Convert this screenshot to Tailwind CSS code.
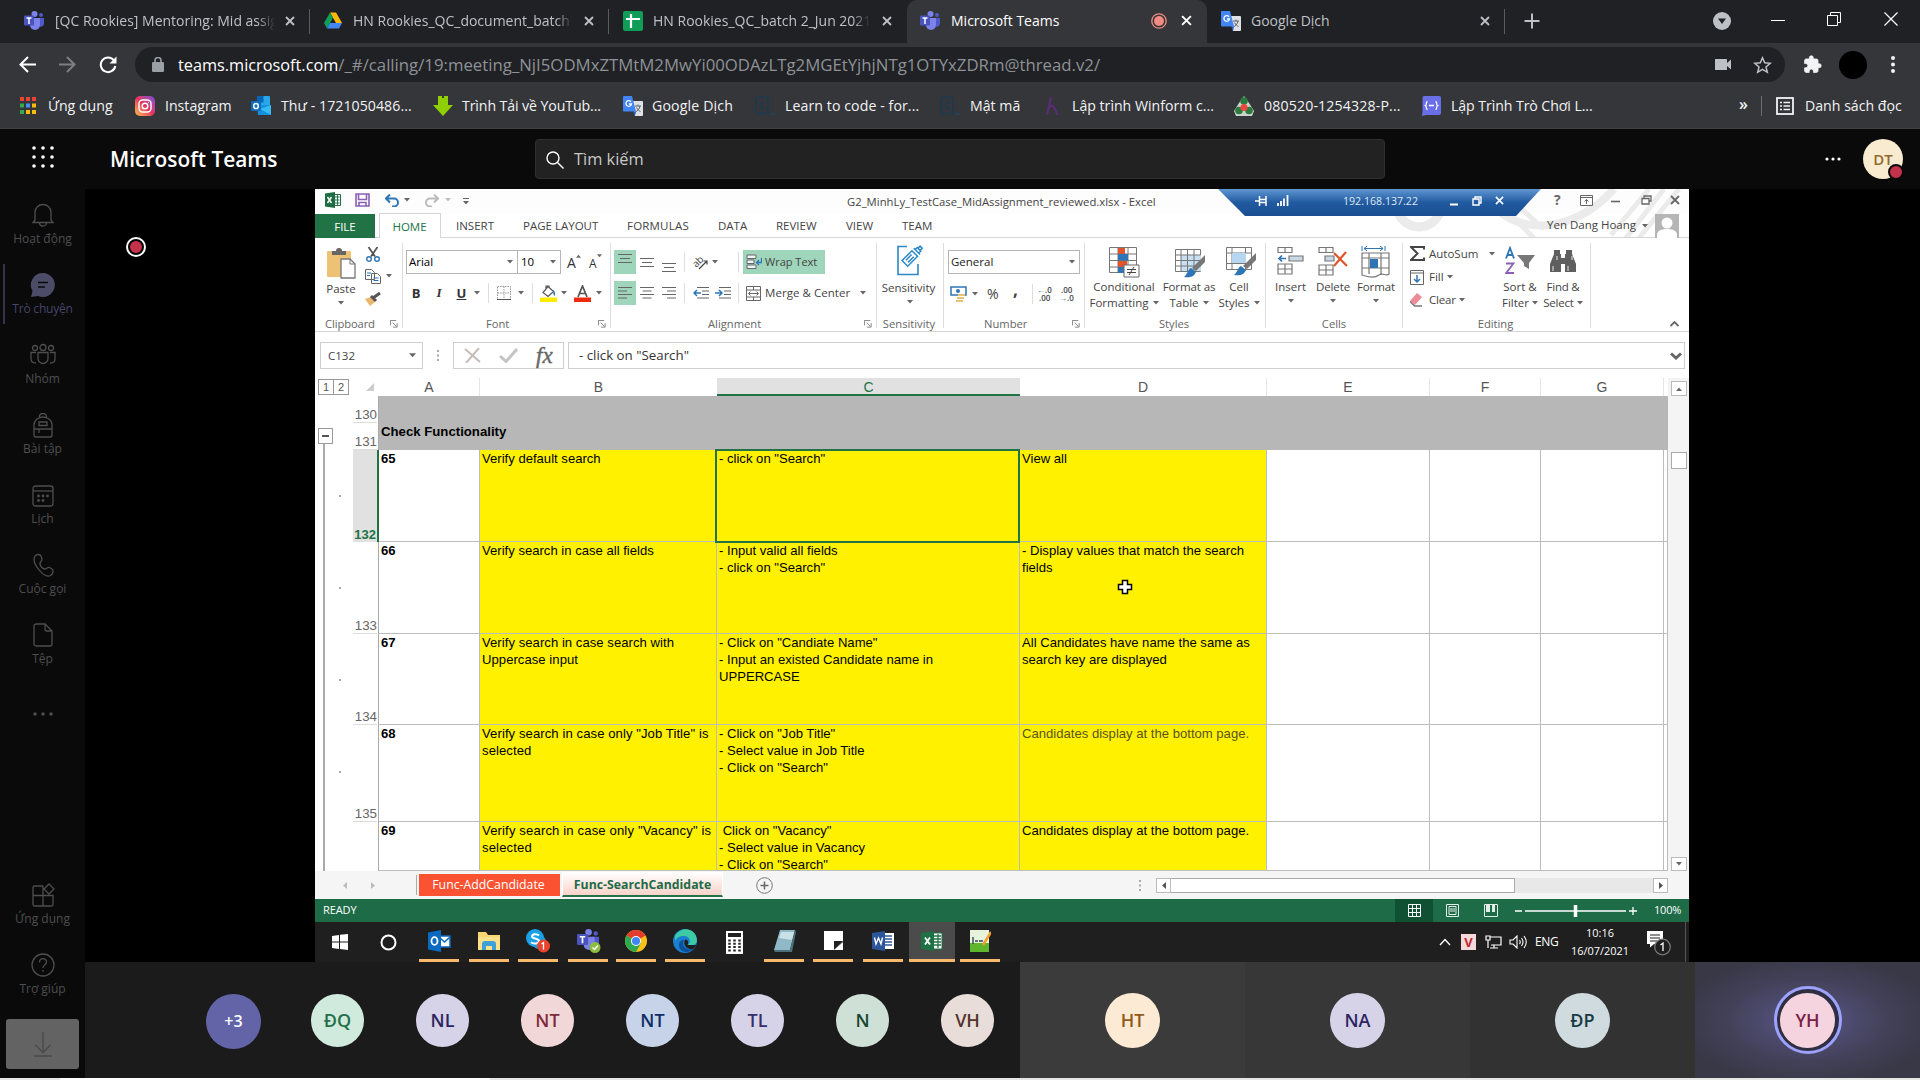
<!DOCTYPE html>
<html lang="vi">
<head>
<meta charset="utf-8">
<title>Microsoft Teams</title>
<script src="https://cdn.jsdelivr.net/npm/@tailwindcss/browser@4"></script>
</head>
<body class="w-[1920px] h-[1080px] overflow-hidden flex flex-col bg-black whitespace-nowrap font-['Open_Sans','Noto_Sans',sans-serif] text-white">

<!-- Shared symbols -->
<svg class="hidden">
  <symbol id="caret" viewBox="0 0 6 4"><path d="M0 0h6L3 3.6z" fill="#666"/></symbol>
  <symbol id="x" viewBox="0 0 10 10"><path d="M1 1l8 8M9 1L1 9" stroke="currentColor" stroke-width="1.8" fill="none"/></symbol>
  <symbol id="launch" viewBox="0 0 9 9"><path d="M.5 6V.5H7M3 3l4 4M8 3.5V8H3.5" stroke="#777" fill="none"/></symbol>
  <symbol id="teams" viewBox="0 0 20 20">
    <circle cx="10.5" cy="3" r="3" fill="#7b83eb"/><circle cx="17" cy="4" r="2" fill="#5059c9"/>
    <path d="M14 7h6v6a3.2 3.2 0 0 1-6 1z" fill="#5059c9"/><path d="M6 7h10v7a5 5 0 0 1-10 0z" fill="#7b83eb"/>
    <rect y="4.500" width="10" height="10" rx="1" fill="#4b53bc"/><path d="M2.500 7h5M5 7v6" stroke="#fff" stroke-width="1.500"/>
  </symbol>
  <symbol id="translate" viewBox="0 0 20 20">
    <path d="M8 5h11a1 1 0 0 1 1 1v13a1 1 0 0 1-1 1h-7z" fill="#dfe1e5"/><path d="M12 10h6M15 8.500V10M17 10c-.5 3-2.500 5-4 5.500M13.500 11.500c1 2 2.500 3.500 4 4" stroke="#5f6368" fill="none"/>
    <path d="M1 0h8l4 15.500H1a1 1 0 0 1-1-1V1a1 1 0 0 1 1-1z" fill="#4285f4"/><path d="M13 15.500L12 20l-2-4.500z" fill="#1a56c4"/>
    <path d="M8 5.800A2.800 2.800 0 1 0 8.500 8H6" stroke="#fff" stroke-width="1.300" fill="none"/>
  </symbol>
  <symbol id="ccode" viewBox="0 0 20 20"><rect x="1" y="1.500" width="12" height="16" rx="1.500" fill="none" stroke="#1d3a4f" stroke-width="1.600"/><path d="M9.500 7a2.500 3 0 1 0 0 5" stroke="#1d3a4f" stroke-width="1.600" fill="none"/><path d="M15 18h5" stroke="#1d4663" stroke-width="1.600"/></symbol>
  <symbol id="outlook" viewBox="0 0 20 20"><rect x="6" width="13" height="13" rx="1" fill="#28a8ea"/><path d="M6 0h6.500v6.500H6z" fill="#0364b8"/><path d="M6 9h14v9a1 1 0 0 1-1 1H7z" fill="#1490df"/><path d="M20 9v10L9 13z" fill="#50d9ff" opacity=".6"/><rect y="5" width="10" height="10" rx="1" fill="#0f6cbd"/><ellipse cx="5" cy="10" rx="2.300" ry="2.600" stroke="#fff" stroke-width="1.500" fill="none"/></symbol>
</svg>

<!-- Browser tab strip -->
<div class="h-[43px] shrink-0 bg-[#202124] flex text-[14px] text-[#bdc1c6] leading-[40px]">
  <div class="w-[309px] pl-6 pr-[14px] flex items-center pb-0.5">
    <svg class="w-5 h-5 shrink-0"><use href="#teams"/></svg>
    <div class="ml-[11px] w-[220px] overflow-hidden mask-r-from-92%">[QC Rookies] Mentoring: Mid assignment</div>
    <svg class="w-[10px] h-[10px] ml-[10px] shrink-0"><use href="#x"/></svg>
  </div>
  <div class="w-px h-[25px] mt-[9px] bg-[#5a5c60]"></div>
  <div class="w-[298px] pl-[14px] flex items-center pb-0.5">
    <svg class="w-[18px] h-[17px] shrink-0" viewBox="0 0 18 16"><path d="M6 0h6l6 10.500h-6z" fill="#ffba00"/><path d="M6 0l3 5.300L3 16 0 10.500z" fill="#0f9d58"/><path d="M6 10.500h12L15 16H3z" fill="#4285f4"/></svg>
    <div class="ml-[11px] w-[220px] overflow-hidden mask-r-from-92%">HN Rookies_QC_document_batch 2</div>
    <svg class="w-[10px] h-[10px] ml-[11px] shrink-0"><use href="#x"/></svg>
  </div>
  <div class="w-px h-[25px] mt-[9px] bg-[#5a5c60]"></div>
  <div class="w-[298px] pl-[14px] flex items-center pb-0.5">
    <svg class="w-5 h-5 shrink-0" viewBox="0 0 20 20"><rect width="20" height="20" rx="2" fill="#0f9d58"/><path d="M8 3v14M3 8h14" stroke="#fff" stroke-width="2.200"/></svg>
    <div class="ml-[10px] w-[217px] overflow-hidden mask-r-from-92%">HN Rookies_QC_batch 2_Jun 2021</div>
    <svg class="w-[10px] h-[10px] ml-[12px] shrink-0"><use href="#x"/></svg>
  </div>
  <div class="w-[300px] bg-[#35363a] rounded-t-[10px] pl-[13px] flex items-center text-white pb-0.5">
    <svg class="w-5 h-5 shrink-0"><use href="#teams"/></svg>
    <div class="ml-[11px] w-[200px]">Microsoft Teams</div>
    <svg class="w-4 h-4 shrink-0" viewBox="0 0 16 16"><circle cx="8" cy="8" r="7.200" fill="none" stroke="#f28b82" stroke-width="1.300"/><circle cx="8" cy="8" r="5" fill="#f28b82"/></svg>
    <svg class="w-[11px] h-[11px] ml-[14px] shrink-0"><use href="#x"/></svg>
  </div>
  <div class="w-[297px] pl-[14px] flex items-center pb-0.5">
    <svg class="w-5 h-5 shrink-0"><use href="#translate"/></svg>
    <div class="ml-[10px] w-[229px]">Google Dịch</div>
    <svg class="w-[10px] h-[10px] shrink-0"><use href="#x"/></svg>
  </div>
  <div class="w-px h-[25px] mt-[9px] bg-[#5a5c60]"></div>
  <div class="w-[415px] pl-[19px] flex items-center pb-0.5">
    <svg class="w-4 h-4" viewBox="0 0 16 16"><path d="M8 .5v15M.5 8h15" stroke="#bdc1c6" stroke-width="2"/></svg>
    <svg class="w-[18px] h-[18px] ml-[173px]" viewBox="0 0 18 18"><circle cx="9" cy="9" r="9" fill="#bdc1c6"/><path d="M5 6.500h8L9 12z" fill="#202124"/></svg>
    <svg class="w-[14px] h-[14px] ml-[40px] mb-1" viewBox="0 0 14 14"><path d="M0 8.500h14" stroke="#fff"/></svg>
    <svg class="w-[14px] h-[14px] ml-[42px] mb-1" viewBox="0 0 14 14"><path d="M.5 3.500h10v10H.5zM3.500 3.500v-3h10v10h-3" fill="none" stroke="#fff"/></svg>
    <svg class="w-[14px] h-[14px] ml-[43px] mb-1" viewBox="0 0 14 14"><path d="M.5.5l13 13M13.500.5l-13 13" stroke="#fff" stroke-width="1.200"/></svg>
  </div>
</div>

<!-- Address bar -->
<div class="h-[43px] shrink-0 bg-[#35363a] flex items-center pl-[19px]">
  <svg class="w-[17px] h-[17px]" viewBox="0 0 17 17"><path d="M17 8.500H2M9 1L1.500 8.500 9 16" fill="none" stroke="#fff" stroke-width="2"/></svg>
  <svg class="w-[17px] h-[17px] ml-[23px]" viewBox="0 0 17 17"><path d="M0 8.500h15M8 1l7.500 7.500L8 16" fill="none" stroke="#7c7e82" stroke-width="2"/></svg>
  <svg class="w-[18px] h-[18px] ml-[23px]" viewBox="0 0 18 18"><path d="M15 4.500A7.300 7.300 0 1 0 16.300 10" fill="none" stroke="#fff" stroke-width="2"/><path d="M17.500 .5v7h-7z" fill="#fff"/></svg>
  <div class="ml-[18px] w-[1650px] h-[35px] rounded-full bg-[#202124] flex items-center pl-[17px]">
    <svg class="w-[12px] h-[15px]" viewBox="0 0 12 15"><rect y="5" width="12" height="10" rx="1.300" fill="#9aa0a6"/><path d="M3 6V3.500a3 3 0 0 1 6 0V6" fill="none" stroke="#9aa0a6" stroke-width="1.600"/></svg>
    <div class="ml-[14px] w-[1528px] text-[#8e9297] text-[16.770px] leading-8 pt-px"><span class="text-white text-[16.300px]">teams.microsoft.com</span>/_#/calling/19:meeting_NjI5ODMxZTMtM2MwYi00ODAzLTg2MGEtYjhjNTg1OTYxZDRm@thread.v2/</div>
    <svg class="w-[16px] h-[11px] ml-[9px]" viewBox="0 0 16 11"><path d="M0 0h12v4l4-3.500v10L12 7v4H0z" fill="#bdc1c6"/></svg>
    <svg class="w-[19px] h-[18px] ml-[22px]" viewBox="0 0 19 18"><path d="M9.500 1.800l2.200 5 5.500.5-4.200 3.600 1.300 5.400-4.800-2.900-4.800 2.900 1.300-5.400-4.200-3.600 5.500-.5z" fill="none" stroke="#bdc1c6" stroke-width="1.500"/></svg>
  </div>
  <svg class="w-[19px] h-[19px] ml-[18px]" viewBox="0 0 24 24"><path d="M20.500 11H19V7c0-1.100-.9-2-2-2h-4V3.500a2.500 2.500 0 0 0-5 0V5H4c-1.100 0-2 .9-2 2v3.800h1.500a2.700 2.700 0 0 1 0 5.400H2V20c0 1.100.9 2 2 2h3.800v-1.500a2.700 2.700 0 0 1 5.400 0V22H17c1.100 0 2-.9 2-2v-4h1.500a2.500 2.500 0 0 0 0-5z" fill="#f1f3f4" stroke="#f1f3f4"/></svg>
  <div class="w-[28px] h-[28px] rounded-full bg-black ml-[17px]"></div>
  <svg class="w-[4px] h-[17px] ml-[24px]" viewBox="0 0 4 17"><circle cx="2" cy="2" r="2" fill="#f1f3f4"/><circle cx="2" cy="8.500" r="2" fill="#f1f3f4"/><circle cx="2" cy="15" r="2" fill="#f1f3f4"/></svg>
</div>

<!-- Bookmarks -->
<div class="h-[43px] shrink-0 bg-[#35363a] border-b border-[#3f4043] flex items-center pl-5 pb-[2px] text-[14.150px] text-[#f1f3f4]">
  <div class="w-[115px] flex items-center gap-3"><svg class="w-4 h-[17px]" viewBox="0 0 16 17"><path d="M0 0h4v4H0zM6 0h4v4H6zM12 0h4v4h-4z" fill="#ea4335"/><path d="M0 6.500h4v4H0zM0 13h4v4H0z" fill="#34a853"/><path d="M6 6.500h4v4H6z" fill="#4a90f0"/><path d="M12 6.500h4v4h-4zM6 13h4v4H6zM12 13h4v4h-4z" fill="#fbbc05"/></svg>Ứng dụng</div>
  <div class="w-[116px] flex items-center gap-[10px]"><div class="w-5 h-5 rounded-[5px] bg-linear-to-tr from-[#fdbb3f] via-[#e4305f] to-[#7a3fd8] grid place-items-center"><svg class="w-[14px] h-[14px]" viewBox="0 0 14 14" fill="none" stroke="#fff" stroke-width="1.400"><rect x="1" y="1" width="12" height="12" rx="3.500"/><circle cx="7" cy="7" r="2.800"/><path d="M10.300 3.500h.6"/></svg></div>Instagram</div>
  <div class="w-[182px] flex items-center gap-[10px]"><svg class="w-5 h-5"><use href="#outlook"/></svg><span class="tracking-[0.050px]">Thư - 1721050486...</span></div>
  <div class="w-[190px] flex items-center gap-[9px]"><svg class="w-5 h-5" viewBox="0 0 20 20"><path d="M5 0h4v2h2V0h4v9h5L10 20 0 9h5z" fill="#8fce00"/></svg><span class="tracking-[-0.100px]">Trình Tải về YouTub...</span></div>
  <div class="w-[132px] flex items-center gap-[9px]"><svg class="w-5 h-5"><use href="#translate"/></svg><span class="tracking-[0.150px]">Google Dịch</span></div>
  <div class="w-[185px] flex items-center gap-[10px]"><svg class="w-5 h-5"><use href="#ccode"/></svg><span class="tracking-[0.080px]">Learn to code - for...</span></div>
  <div class="w-[102px] flex items-center gap-[10px]"><svg class="w-5 h-5"><use href="#ccode"/></svg>Mật mã</div>
  <div class="w-[192px] flex items-center gap-[10px]"><svg class="w-5 h-5" viewBox="0 0 20 20"><path d="M9 1L5 19M6.500 12c3-4 5-2 6 0s2 5 3 7" fill="none" stroke="#5d2a7c" stroke-width="2"/></svg>Lập trình Winform c...</div>
  <div class="w-[187px] flex items-center gap-[10px]"><svg class="w-5 h-5" viewBox="0 0 20 20"><path d="M10 0l5 7 5 8-2 5H2l-2-5 5-8z" fill="#c9d6c9"/><circle cx="10" cy="5" r="3.800" fill="#2d7a3e"/><circle cx="5" cy="14.500" r="3.800" fill="#2d7a3e"/><circle cx="15" cy="14.500" r="3.800" fill="#2d7a3e"/><circle cx="10" cy="11.500" r="3.600" fill="#e8483f"/></svg><span class="tracking-[0.150px]">080520-1254328-P...</span></div>
  <div class="w-[318px] flex items-center gap-[10px]"><svg class="w-5 h-5" viewBox="0 0 20 20"><path d="M3 0h15a2 2 0 0 1 2 2v15a2 2 0 0 1-2 2H5l-4 1 .5-4V2A2 2 0 0 1 3 0z" fill="#6a6fe8"/><path d="M6.500 5.500c-2 0-.5 3.500-2 4 1.500.5 0 4 2 4M14.500 5.500c2 0 .5 3.500 2 4-1.500.5 0 4-2 4M8 9.500h5" fill="none" stroke="#fff" stroke-width="1.300"/></svg><span class="tracking-[-0.080px]">Lập Trình Trò Chơi L...</span></div>
  <div class="w-[22px] font-semibold text-base leading-4 pb-1">»</div>
  <div class="w-px h-5 bg-[#6b6d70]"></div>
  <svg class="w-[18px] h-[18px] ml-[14px]" viewBox="0 0 18 18"><rect x="1" y="1" width="16" height="16" fill="none" stroke="#f1f3f4" stroke-width="1.800"/><path d="M4 5.500h2M4 9h2M4 12.500h2M7.500 5.500H14M7.500 9H14M7.500 12.500H14" stroke="#f1f3f4" stroke-width="1.700"/></svg>
  <div class="ml-[11px]">Danh sách đọc</div>
</div>

<!-- Teams header -->
<header class="h-[60px] shrink-0 bg-[#0a0a0a] flex items-center">
  <svg class="w-[22px] h-[22px] ml-8 mb-1" viewBox="0 0 22 22" fill="#fff"><circle cx="2" cy="2" r="1.800"/><circle cx="11" cy="2" r="1.800"/><circle cx="20" cy="2" r="1.800"/><circle cx="2" cy="11" r="1.800"/><circle cx="11" cy="11" r="1.800"/><circle cx="20" cy="11" r="1.800"/><circle cx="2" cy="20" r="1.800"/><circle cx="11" cy="20" r="1.800"/><circle cx="20" cy="20" r="1.800"/></svg>
  <h1 class="ml-[56px] w-[425px] text-[20.900px] font-semibold pt-[2px]">Microsoft Teams</h1>
  <div class="w-[850px] h-10 rounded bg-[#222] border border-[#2f2f2f] flex items-center pl-[10px] text-[16.400px] text-[#c8c8c8] pt-px">
    <svg class="w-[18px] h-[18px] mr-[10px]" viewBox="0 0 18 18" fill="none" stroke="#fff" stroke-width="1.400"><circle cx="7" cy="7" r="6"/><path d="M11.500 11.500l6 6"/></svg>Tìm kiếm
  </div>
  <svg class="w-[16px] h-[4px] ml-[440px]" viewBox="0 0 16 4" fill="#fff"><circle cx="2" cy="2" r="1.600"/><circle cx="8" cy="2" r="1.600"/><circle cx="14" cy="2" r="1.600"/></svg>
  <div class="relative ml-[22px] size-10 rounded-full bg-[#f8ebcf] grid place-items-center text-[15px] font-semibold text-[#8f6a2e]">DT
    <div class="absolute left-[25px] top-[25px] size-4 rounded-full bg-[#c4314b] border-2 border-[#0a0a0a]"></div>
  </div>
</header>

<div class="h-[889px] shrink-0 flex">
  <!-- App rail -->
  <nav class="w-[85px] bg-[#0a0a0a] flex flex-col text-[12px] leading-4 text-[#4e4e4e] text-center">
    <div class="h-[70px] flex flex-col items-center pt-[14px] gap-1"><svg class="w-6 h-6" viewBox="0 0 24 24" fill="none" stroke="currentColor" stroke-width="1.300"><path d="M4 17V9a8 7.500 0 0 1 16 0v8l2 2.500H2zM8.500 20a3.500 3 0 0 0 7 0"/></svg><div>Hoạt động</div></div>
    <div class="h-[70px] flex flex-col items-center pt-[13px] gap-[3px] relative text-[#45456a]"><div class="absolute left-[3px] top-[5px] w-[2px] h-[60px] bg-[#33344a]"></div><svg class="w-[26px] h-[26px]" viewBox="0 0 26 26"><path d="M13 1a12 12 0 1 1-5 23l-7 1 1.500-6A12 12 0 0 1 13 1z" fill="#4c4c69"/><path d="M8 10.500h10M8 15h7" stroke="#0a0a0a" stroke-width="1.600"/></svg><div class="tracking-[-0.200px]">Trò chuyện</div></div>
    <div class="h-[70px] flex flex-col items-center pt-[14px] gap-1"><svg class="w-[26px] h-[24px]" viewBox="0 0 26 24" fill="none" stroke="currentColor" stroke-width="1.300"><circle cx="5" cy="5" r="2.500"/><circle cx="13" cy="4.500" r="3"/><circle cx="21" cy="5" r="2.500"/><path d="M8 9.500h10v6a5 5 0 0 1-10 0zM6 9.500H1V16c0 3 2 4 5 4M20 9.500h5V16c0 3-2 4-5 4"/></svg><div>Nhóm</div></div>
    <div class="h-[70px] flex flex-col items-center pt-[14px] gap-[3px]"><svg class="w-6 h-[25px]" viewBox="0 0 24 25" fill="none" stroke="currentColor" stroke-width="1.300"><path d="M3 22V12a9 8 0 0 1 18 0v10c0 1-1 2-2 2H5c-1 0-2-1-2-2zM8.500 5V3.500a3.500 3 0 0 1 7 0V5M3 16h18M8 16v4M8 9h8v3.500H8z"/></svg><div>Bài tập</div></div>
    <div class="h-[70px] flex flex-col items-center pt-[16px] gap-1"><svg class="w-[22px] h-[22px]" viewBox="0 0 22 22" fill="none" stroke="currentColor" stroke-width="1.300"><rect x="1" y="1" width="20" height="20" rx="2.500"/><path d="M1 6h20"/><g fill="currentColor" stroke="none"><circle cx="6.500" cy="11" r="1.400"/><circle cx="11" cy="11" r="1.400"/><circle cx="15.500" cy="11" r="1.400"/><circle cx="6.500" cy="15.500" r="1.400"/><circle cx="11" cy="15.500" r="1.400"/></g></svg><div>Lịch</div></div>
    <div class="h-[70px] flex flex-col items-center pt-[14px] gap-1"><svg class="w-6 h-6" viewBox="0 0 24 24" fill="none" stroke="currentColor" stroke-width="1.300"><path d="M4 3c2-2 5-2 6 0l1 3c.5 2-2.500 3-2 5s2.500 4.500 4.500 5 3-2.500 5-1.500l2.500 1.500c2 1.500 1 5-1.500 6.500C13 26 0 10 4 3z"/></svg><div>Cuộc gọi</div></div>
    <div class="h-[70px] flex flex-col items-center pt-[14px] gap-1"><svg class="w-5 h-6" viewBox="0 0 20 24" fill="none" stroke="currentColor" stroke-width="1.300"><path d="M3 1h9l7 7v13c0 1-1 2-2 2H3c-1 0-2-1-2-2V3c0-1 1-2 2-2zM12 1v5c0 1 1 2 2 2h5"/></svg><div>Tệp</div></div>
    <div class="h-[186px] flex flex-col items-center pt-[33px]"><svg class="w-5 h-[4px]" viewBox="0 0 20 4" fill="currentColor"><circle cx="2" cy="2" r="1.800"/><circle cx="10" cy="2" r="1.800"/><circle cx="18" cy="2" r="1.800"/></svg></div>
    <div class="h-[70px] flex flex-col items-center pt-[18px] gap-1"><svg class="w-6 h-6" viewBox="0 0 24 24" fill="none" stroke="currentColor" stroke-width="1.300"><path d="M12 3H3.500C2.500 3 2 3.500 2 4.500v17c0 1 .5 1.500 1.500 1.500h17c1 0 1.500-.5 1.500-1.500V12.500H2M12 3v20M18 1l5 5-5 5-5-5z"/></svg><div>Ứng dụng</div></div>
    <div class="h-[73px] flex flex-col items-center pt-[18px] gap-1"><svg class="w-6 h-6" viewBox="0 0 24 24" fill="none" stroke="currentColor" stroke-width="1.300"><circle cx="12" cy="12" r="11"/><path d="M8.500 9.500c0-5 7-5 7-.5 0 3-3.500 2.500-3.500 6M12 17v1.800"/></svg><div>Trợ giúp</div></div>
    <div class="mx-auto w-[73px] h-[50px] mt-[11px] bg-[#636363] rounded-[3px] grid place-items-center"><svg class="w-[18px] h-[25px]" viewBox="0 0 18 25" fill="none" stroke="#4a4a4a" stroke-width="1.400"><path d="M9 0v20M1.500 13L9 20.500 16.500 13M0 24h18"/></svg></div>
  </nav>

  <main class="flex-1 flex flex-col">
    <div class="h-[773px] flex">
      <div class="w-[230px] pt-[48px] pl-[41px]"><div class="size-[20px] rounded-full border-2 border-white grid place-items-center"><div class="size-3 rounded-full bg-[#c4314b]"></div></div></div>

      <!-- Shared desktop: spreadsheet window -->
      <div class="w-[1374px] flex flex-col bg-white text-[#444] text-[11.500px]">
        <!-- Title row -->
        <div class="h-[25px] relative bg-[#fdfdfd] flex items-center text-[11.300px]">
          <svg class="absolute right-0 top-0 w-[360px] h-[49px]" viewBox="0 0 360 49" fill="none" stroke="#ebebeb"><circle cx="90" cy="16" r="22" stroke-width="9"/><path d="M155 0l50 49M170 0l45 40M350 0l-40 49M335 0l-38 49M320 0l-38 46" stroke-width="5"/><path d="M160 10c20 34 80 40 125-10" stroke-width="8"/></svg>
          <svg class="w-4 h-4 ml-[10px] mb-[3px]" viewBox="0 0 16 16"><path d="M9 2.500h6.500v11H9z" fill="#fff" stroke="#217346"/><path d="M9.500 5h5M9.500 8h5M9.500 11h5M12.500 3v10" stroke="#217346"/><path d="M0 1.500L10 0v16L0 14.500z" fill="#1e6b43"/><path d="M2.500 5l4 6M6.500 5l-4 6" stroke="#fff" stroke-width="1.400"/></svg>
          <svg class="w-[15px] h-[14px] ml-[14px] mb-[3px]" viewBox="0 0 15 14"><path d="M1 1h13v12H1zM3.500 1v5.500h8V1M4 13V9.500h7V13" fill="none" stroke="#8a5fb5" stroke-width="1.600"/></svg>
          <svg class="w-[15px] h-[13px] ml-[15px] mb-[3px]" viewBox="0 0 15 13"><path d="M1 4.500h8a4 4 0 0 1 0 8H7M5 .5l-4 4 4 4" fill="none" stroke="#2e75b6" stroke-width="2"/></svg>
          <svg class="w-[6px] h-1 ml-[4px] mb-[3px]"><use href="#caret"/></svg>
          <svg class="w-[15px] h-[13px] ml-[14px] mb-[3px]" viewBox="0 0 15 13"><path d="M14 4.500H6a4 4 0 0 0 0 8h2M10 .5l4 4-4 4" fill="none" stroke="#bbb" stroke-width="2"/></svg>
          <svg class="w-[6px] h-1 ml-[6px] mb-[3px] opacity-40"><use href="#caret"/></svg>
          <svg class="w-[6px] h-[7px] ml-3 mb-[1px]" viewBox="0 0 6 7"><path d="M0 .5h6" stroke="#666"/><path d="M0 3h6L3 6.500z" fill="#666"/></svg>
          <div class="ml-[378px] w-[371px] pt-[1px]">G2_MinhLy_TestCase_MidAssignment_reviewed.xlsx - Excel</div>
          <div class="relative self-start w-[323px] h-[27px] bg-linear-to-b from-[#5e97d3] via-[#215a9f] to-[#1b4e93] [clip-path:polygon(0_0,100%_0,298px_100%,27px_100%)] flex items-center text-[#dfe9f5] text-[10.600px] pb-0.5">
            <svg class="w-3 h-[10px] ml-[37px] mb-0.5" viewBox="0 0 12 10"><path d="M0 5h4M4.500 0v10M5 3.500h6v3H5M11 0v10" stroke="#fff" stroke-width="1.500" fill="none"/></svg>
            <svg class="w-3 h-[11px] ml-[10px] mb-0.5" viewBox="0 0 12 11"><path d="M1 11V8M4 11V6M7 11V3.500M10.500 11V0" stroke="#fff" stroke-width="1.800"/></svg>
            <div class="ml-[54px] w-[75px]">192.168.137.22</div>
            <svg class="w-2 h-[10px] ml-[32px] mb-0.5" viewBox="0 0 8 10"><path d="M0 8.500h8" stroke="#fff" stroke-width="2"/></svg>
            <svg class="w-[10px] h-[10px] ml-[14px] mb-0.5" viewBox="0 0 10 10"><path d="M3 3V1h6v6H7M1 3h6v6H1z" fill="none" stroke="#fff" stroke-width="1.400"/></svg>
            <svg class="w-[9px] h-[9px] ml-[13px] text-white mb-0.5"><use href="#x"/></svg>
          </div>
          <div class="relative flex items-center pb-[3px]">
            <div class="ml-[13px] w-2 font-bold text-[14px] leading-4 text-[#666]">?</div>
            <svg class="w-[13px] h-[11px] ml-[18px]" viewBox="0 0 13 11"><path d="M.5.5h12v10H.5zM.5 2.500h12M6.500 9V4.500M4.500 6.500l2-2 2 2" fill="none" stroke="#666"/></svg>
            <svg class="w-[9px] h-[10px] ml-[18px]" viewBox="0 0 9 10"><path d="M0 6.500h9" stroke="#666" stroke-width="1.600"/></svg>
            <svg class="w-[11px] h-[10px] ml-[21px]" viewBox="0 0 11 10"><path d="M3 3V1h7v5H8M1 3.500h7v5.500H1z" fill="none" stroke="#666" stroke-width="1.300"/></svg>
            <svg class="w-[10px] h-[10px] ml-[18px] text-[#666]"><use href="#x"/></svg>
          </div>
        </div>
        <!-- Ribbon tabs -->
        <div class="h-[24px] relative border-b border-[#d5d5d5] flex items-center leading-[25px]">
          <div class="w-[60px] h-[24px] bg-[#217346] text-white text-center">FILE</div>
          <div class="ml-1 w-[62px] h-[25px] bg-white border border-b-0 border-[#d5d5d5] text-[#217346] text-center pr-px">HOME</div>
          <div class="ml-[15px] w-[67px]">INSERT</div><div class="w-[104px]">PAGE LAYOUT</div><div class="w-[91px] tracking-[0.200px]">FORMULAS</div><div class="w-[58px]">DATA</div><div class="w-[70px]">REVIEW</div><div class="w-[56px]">VIEW</div><div class="w-[645px]">TEAM</div>
          <div class="w-[95px] leading-[22px] pb-0.5">Yen Dang Hoang</div>
          <svg class="w-[6px] h-1"><use href="#caret"/></svg>
          <svg class="w-6 h-6 ml-[7px]" viewBox="0 0 24 24"><path d="M0 0h24v24H0z" fill="#b5b5b5"/><circle cx="12" cy="9" r="5.500" fill="#fff"/><path d="M2 24v-3c0-4 4-6 10-6s10 2 10 6v3z" fill="#fff"/></svg>
        </div>
        <!-- Ribbon -->
        <div class="h-[94px] border-b border-[#d5d5d5] flex pt-[5px]">
          <!-- Clipboard -->
          <div class="w-[88px] h-[85px] border-r border-[#dcdcdc] flex flex-col">
            <div class="flex h-[70px] shrink-0">
              <div class="w-[52px] flex flex-col items-center pt-1"><svg class="w-[29px] h-[32px]" viewBox="0 0 29 32"><rect y="4" width="24" height="26" rx="1" fill="#eec274"/><path d="M5 8V4h4a3 3 0 0 1 6 0h4v4z" fill="#666"/><path d="M14 12h9l5 5v14H14z" fill="#fff" stroke="#777" stroke-width="1.300"/><path d="M23 12v5h5" fill="none" stroke="#777"/></svg><div class="leading-[17px] mt-px">Paste</div><svg class="w-[6px] h-1 mt-[4px]"><use href="#caret"/></svg></div>
              <div class="w-3 h-[67px] flex flex-col items-center justify-around">
                <svg class="w-[14px] h-[15px]" viewBox="0 0 14 15"><path d="M2.500 0L9 9.500M11.500 0L5 9.500" stroke="#555" stroke-width="1.800"/><circle cx="3" cy="12" r="2.300" fill="none" stroke="#2e75b6" stroke-width="1.400"/><circle cx="11" cy="12" r="2.300" fill="none" stroke="#2e75b6" stroke-width="1.400"/></svg>
                <svg class="w-[16px] h-[15px]" viewBox="0 0 16 15"><path d="M.5.5h6l3 3v7h-9zM6.500 4.500h6l3 3v7h-9z" fill="#fff" stroke="#666"/><path d="M8.500 9h5M8.500 11.500h5M2 4h4M2 6.500h3" stroke="#2e75b6"/></svg>
                <svg class="w-[16px] h-[14px]" viewBox="0 0 16 14"><path d="M0 7l6-2 4 5-5 4z" fill="#e8b96a"/><path d="M6 4l5 5M8 6l7-5" stroke="#555" stroke-width="3"/></svg>
              </div>
              <div class="pt-[31px] pl-[7px] leading-none"><svg class="w-[6px] h-1"><use href="#caret"/></svg></div>
            </div>
            <div class="flex items-center h-[22px] pl-[10px] text-[11.200px] text-[#666] shrink-0"><div class="w-[65px] tracking-[-0.100px]">Clipboard</div><svg class="w-2 h-2"><use href="#launch"/></svg></div>
          </div>
          <!-- Font -->
          <div class="w-[208px] h-[85px] border-r border-[#dcdcdc] flex flex-col text-[#333]">
            <div class="flex h-[38px] pt-[7px] pl-[3px] shrink-0">
              <div class="w-[112px] h-[24px] border border-[#b5b5b5] flex items-center pl-[2px] text-black"><div class="w-[98px]">Arial</div><svg class="w-[6px] h-1"><use href="#caret"/></svg></div>
              <div class="w-[43px] h-[24px] border border-l-0 border-[#b5b5b5] flex items-center pl-[3px] text-black text-[11.500px]"><div class="w-[29px]">10</div><svg class="w-[6px] h-1"><use href="#caret"/></svg></div>
              <div class="w-[23px] pl-[6px] text-[14px] leading-[26px] flex">A<svg class="w-[5px] h-[4px] mt-[4px] rotate-180"><use href="#caret"/></svg></div>
              <div class="w-[20px] pl-[5px] text-[12px] leading-[28px] flex">A<svg class="w-[5px] h-[4px] mt-[4px]"><use href="#caret"/></svg></div>
            </div>
            <div class="flex items-center h-[24px] text-[13px] leading-5 shrink-0">
              <div class="w-[26px] text-center font-bold">B</div><div class="w-[20px] text-center font-['Liberation_Serif',serif] italic font-bold">I</div><div class="w-[25px] text-center font-bold underline">U</div>
              <svg class="w-[6px] h-1"><use href="#caret"/></svg><div class="w-px h-5 bg-[#ddd] ml-[8px]"></div>
              <svg class="w-[14px] h-[14px] ml-[8px]" viewBox="0 0 14 14"><path d="M.5.5h13v13H.5zM7 .5v13M.5 7h13" fill="none" stroke="#999" stroke-dasharray="1.500 1"/><path d="M0 13.500h14" stroke="#555"/></svg>
              <svg class="w-[6px] h-1 ml-[7px]"><use href="#caret"/></svg><div class="w-px h-5 bg-[#ddd] ml-[8px]"></div>
              <svg class="w-[17px] h-[17px] ml-[7px]" viewBox="0 0 17 17"><path d="M8 1.500l5.500 5L8 11.500 3 7.500zM6 4V1h3v2" fill="#fff" stroke="#555" stroke-width="1.200"/><path d="M13 5c3 2 2 6 1.500 6S13 8 13 5z" fill="#2e75b6"/><path d="M0 12.500h17V17H0z" fill="#ffeb00"/></svg>
              <svg class="w-[6px] h-1 ml-[4px]"><use href="#caret"/></svg>
              <svg class="w-[17px] h-[17px] ml-[7px]" viewBox="0 0 17 17"><path d="M4 12L8.500 1 13 12M5.500 8.500h6" fill="none" stroke="#555" stroke-width="1.700"/><path d="M0 12.500h17V17H0z" fill="#ee2a10"/></svg>
              <svg class="w-[6px] h-1 ml-[5px]"><use href="#caret"/></svg>
            </div>
            <div class="flex items-center h-[22px] mt-[8px] pl-[83px] text-[11.200px] text-[#666] shrink-0"><div class="w-[112px]">Font</div><svg class="w-2 h-2"><use href="#launch"/></svg></div>
          </div>
          <!-- Alignment -->
          <div class="w-[266px] h-[85px] border-r border-[#dcdcdc] flex flex-col">
            <div class="flex h-[31px] pt-[7px] pl-[3px] items-center shrink-0">
              <div class="w-[22px] h-[24px] bg-[#9fd5bb] grid justify-center pt-1"><svg class="w-[14px] h-[9px]" viewBox="0 0 14 9"><path d="M0 .5h14M2 4.500h10M0 8.500h14" stroke="#666"/></svg></div>
              <svg class="w-[14px] h-[9px] ml-1" viewBox="0 0 14 9"><path d="M0 .5h14M2 4.500h10M0 8.500h14" stroke="#666"/></svg>
              <svg class="w-[14px] h-[9px] ml-2 mt-[10px]" viewBox="0 0 14 9"><path d="M0 .5h14M2 4.500h10M0 8.500h14" stroke="#666"/></svg>
              <div class="w-px h-5 bg-[#ddd] ml-[8px]"></div>
              <svg class="w-4 h-4 ml-[8px]" viewBox="0 0 16 16"><g transform="rotate(-45 6 7)"><text x="-1" y="10" font-size="10" fill="#444">ab</text></g><path d="M6 15l8-8M10.500 7H14v3.500" fill="none" stroke="#444" stroke-width="1.200"/></svg>
              <svg class="w-[6px] h-1 ml-[3px]"><use href="#caret"/></svg>
              <div class="w-px h-5 bg-[#ddd] ml-[20px]"></div>
              <div class="ml-1 w-[82px] h-[24px] bg-[#9fd5bb] flex items-center pl-[3px] text-[11px]"><svg class="w-4 h-4 mr-[3px]" viewBox="0 0 16 16"><path d="M1 1h9v3.500H1zM1 6h7v3.500H1zM1 11h9v3.500H1z" fill="#eef6fb" stroke="#666"/><path d="M15.500 4v4.500H11M13 6l-2.500 2.500L13 11" fill="none" stroke="#2e75b6" stroke-width="1.300"/></svg>Wrap Text</div>
            </div>
            <div class="flex h-[24px] mt-[7px] pl-[3px] items-center shrink-0">
              <div class="w-[22px] h-[24px] bg-[#9fd5bb] grid place-items-center"><svg class="w-[14px] h-[12px]" viewBox="0 0 14 12"><path d="M0 .5h14M0 4h9M0 7.500h14M0 11h9" stroke="#666"/></svg></div>
              <svg class="w-[14px] h-[12px] ml-1" viewBox="0 0 14 12"><path d="M0 .5h14M2.500 4h9M0 7.500h14M2.500 11h9" stroke="#666"/></svg>
              <svg class="w-[14px] h-[12px] ml-2" viewBox="0 0 14 12"><path d="M0 .5h14M5 4h9M0 7.500h14M5 11h9" stroke="#666"/></svg>
              <div class="w-px h-5 bg-[#ddd] ml-[8px]"></div>
              <svg class="w-4 h-3 ml-[8px]" viewBox="0 0 16 12"><path d="M4 .5h12M9 4h7M9 7.500h7M4 11h12" stroke="#666"/><path d="M8 6H1.500M4 3L1 6l3 3" fill="none" stroke="#2e75b6" stroke-width="1.500"/></svg>
              <svg class="w-4 h-3 ml-[6px]" viewBox="0 0 16 12"><path d="M4 .5h12M9 4h7M9 7.500h7M4 11h12" stroke="#666"/><path d="M0 6h6.500M4 3l3 3-3 3" fill="none" stroke="#2e75b6" stroke-width="1.500"/></svg>
              <div class="w-px h-5 bg-[#ddd] ml-[7px]"></div>
              <svg class="w-[15px] h-[15px] ml-[7px] mr-1" viewBox="0 0 15 15"><path d="M.5.5h14v14H.5zM.5 4h14M.5 11h14M7.500.5V4M7.500 11v3.500" fill="none" stroke="#666"/><path d="M2.500 7.500h10M4.500 5.500l-2 2 2 2M10.500 5.500l2 2-2 2" fill="none" stroke="#666"/></svg>
              <div class="w-[95px] tracking-[0.050px]">Merge &amp; Center</div><svg class="w-[6px] h-1"><use href="#caret"/></svg>
            </div>
            <div class="flex items-center h-[22px] mt-[8px] pl-[97px] text-[11.200px] text-[#666] shrink-0"><div class="w-[156px]">Alignment</div><svg class="w-2 h-2"><use href="#launch"/></svg></div>
          </div>
          <!-- Sensitivity -->
          <div class="w-[67px] h-[85px] border-r border-[#dcdcdc] flex flex-col items-center pt-px [&>*]:shrink-0">
            <svg class="w-[30px] h-[32px]" viewBox="0 0 30 32"><path d="M12 2.500H3v28h20V20" fill="none" stroke="#2b88c9" stroke-width="1.600"/><g transform="rotate(45 18 12)" fill="#fff" stroke="#2b88c9" stroke-width="1.500"><rect x="13.500" y="9" width="8" height="14"/><path d="M16 12v8M19 12v8M13 6h9M15 6V3h5v3M16 0h3v3h-3z"/></g></svg>
            <div class="leading-[17px] mt-[3px] -ml-[3px]">Sensitivity</div><svg class="w-[6px] h-1 mt-1"><use href="#caret"/></svg>
            <div class="mt-[12px] leading-[16px] text-[11.200px] text-[#666] -ml-[2px]">Sensitivity</div>
          </div>
          <!-- Number -->
          <div class="w-[141px] h-[85px] border-r border-[#dcdcdc] flex flex-col">
            <div class="h-[39px] pt-[7px] pl-1 shrink-0"><div class="w-[132px] h-[24px] border border-[#b5b5b5] flex items-center pl-[2px] text-[#222]"><div class="w-[118px]">General</div><svg class="w-[6px] h-1"><use href="#caret"/></svg></div></div>
            <div class="flex h-[24px] items-center pl-[6px] shrink-0">
              <svg class="w-[17px] h-[16px]" viewBox="0 0 17 16"><path d="M1 1h15v8H1z" fill="#fff" stroke="#2e75b6" stroke-width="1.500"/><circle cx="8" cy="5" r="2" fill="#2e75b6"/><path d="M8 8h7v2H8zM7 11h7v2H7zM6 14h7v2H6z" fill="#eec274"/></svg>
              <svg class="w-[6px] h-1 ml-[5px]"><use href="#caret"/></svg>
              <div class="ml-[9px] w-[26px] text-[14px] leading-6">%</div><div class="w-[19px] text-[17px] font-bold leading-4 pb-2">,</div><div class="w-px h-5 bg-[#ddd]"></div>
              <div class="ml-[4px] w-[22px] text-[8px] leading-[8px] font-semibold"><span class="text-[#2e75b6]">←</span>.0<br>&nbsp;.00</div>
              <div class="w-[20px] text-[8px] leading-[8px] font-semibold">&nbsp;.00<br><span class="text-[#2e75b6]">→</span>.0</div>
            </div>
            <div class="flex items-center h-[22px] mt-[7px] pl-[40px] text-[11.200px] text-[#666] shrink-0"><div class="w-[88px]">Number</div><svg class="w-2 h-2"><use href="#launch"/></svg></div>
          </div>
          <!-- Styles -->
          <div class="w-[181px] h-[85px] border-r border-[#dcdcdc] flex flex-col">
            <div class="flex h-[71px] leading-4 text-center pt-[3px] shrink-0">
              <div class="w-[78px] flex flex-col items-center"><svg class="w-[31px] h-[32px]" viewBox="0 0 31 32"><path d="M.5 1.500h27v25H.5zM9 1.500v25M19 1.500v25M.5 8h27M.5 14.500h27M.5 21h27" fill="#fff" stroke="#777"/><path d="M9 2h7v6H9zM9 15h9v6H9z" fill="#e0562c"/><path d="M9 8h10v6.500H9zM9 21h6v6H9z" fill="#2e75b6"/><path d="M15 19h15v12H15z" fill="#fff" stroke="#666"/><path d="M18 23.500h9M18 26.500h9M25 21l-5 8" stroke="#444" fill="none"/></svg><div class="mt-px">Conditional</div><div class="flex items-center gap-1">Formatting<svg class="w-[6px] h-1"><use href="#caret"/></svg></div></div>
              <div class="w-[52px] flex flex-col items-center"><svg class="w-[31px] h-[32px] ml-0.5" viewBox="0 0 31 32"><path d="M.5 3.500h25v22H.5z" fill="#fff" stroke="#777"/><path d="M6 9h20v16H6z" fill="#c7dff2"/><path d="M6 3.500v22M12.500 3.500v22M19 3.500v22M.5 9h25M.5 14.500h25M.5 20h25" stroke="#777"/><path d="M30 9v7l-9 9-4-3z" fill="#777"/><path d="M16 22l5 4c-2 5-7 6-12 5 3-2 4-8 7-9z" fill="#2e75b6"/></svg><div class="mt-px tracking-[-0.100px]">Format as</div><div class="flex items-center gap-1">Table<svg class="w-[6px] h-1"><use href="#caret"/></svg></div></div>
              <div class="w-[48px] flex flex-col items-center"><svg class="w-[31px] h-[32px] ml-1" viewBox="0 0 31 32"><path d="M.5 1.500h25v22H.5zM6 1.500v22M19.500 1.500v22M.5 7h25M.5 17.500h25" fill="#fff" stroke="#777"/><path d="M6 7h14v10H6z" fill="#b7d6ef"/><path d="M30 7v7l-9 9-4-3z" fill="#777"/><path d="M15 20l5 4c-2 5-7 6-12 5 3-2 4-8 7-9z" fill="#2e75b6"/></svg><div class="mt-px">Cell</div><div class="flex items-center gap-1">Styles<svg class="w-[6px] h-1"><use href="#caret"/></svg></div></div>
            </div>
            <div class="text-center leading-[20px] text-[11.200px] text-[#666] pr-0.5">Styles</div>
          </div>
          <!-- Cells -->
          <div class="w-[137px] h-[85px] border-r border-[#dcdcdc] flex flex-col">
            <div class="flex h-[71px] leading-4 pt-[3px] shrink-0">
              <div class="w-[49px] flex flex-col items-center"><svg class="w-[27px] h-[32px]" viewBox="0 0 27 32" fill="#fff" stroke="#777" stroke-width="1.200"><path d="M1 1.500h14v5H1zM8 1.500v5M1 18h14v10H1zM8 18v10M1 23h14"/><path d="M12 10h14v5H12z" fill="#c9d8e6"/><path d="M9 12.500H2M5 9.500l-3 3 3 3" stroke="#2e75b6" stroke-width="1.700" fill="none"/></svg><div class="mt-px">Insert</div><svg class="w-[6px] h-1 mt-[4px]"><use href="#caret"/></svg></div>
              <div class="w-[36px] flex flex-col items-center"><svg class="w-[30px] h-[32px]" viewBox="0 0 30 32" fill="#fff" stroke="#777" stroke-width="1.200"><path d="M1 1.500h14v5H1zM8 1.500v5M1 19h14v10H1zM8 19v10M1 24h14"/><path d="M7 10h9v5H7z" fill="#c9d8e6"/><path d="M16 7l13 13M28 6L16 20" stroke="#e0562c" stroke-width="2.200" fill="none"/></svg><div class="mt-px tracking-[-0.100px]">Delete</div><svg class="w-[6px] h-1 mt-[4px]"><use href="#caret"/></svg></div>
              <div class="w-[50px] flex flex-col items-center"><svg class="w-[30px] h-[32px]" viewBox="0 0 30 32"><path d="M1 7h27v21c-3 3-6-2-10 1s-9 3-17 0zM8 7v21M20 7v21M1 12h27M1 22h27" fill="#fff" stroke="#777" stroke-width="1.200"/><path d="M9 13h8v9H9z" fill="#2e75b6"/><path d="M1 0v5M24 0v5M3 2.500h19M6 0L3 2.500 6 5M19 0l3 2.500L19 5" fill="none" stroke="#2e75b6"/></svg><div class="mt-px tracking-[-0.100px]">Format</div><svg class="w-[6px] h-1 mt-[4px]"><use href="#caret"/></svg></div>
            </div>
            <div class="text-center leading-[20px] text-[11.200px] text-[#666]">Cells</div>
          </div>
          <!-- Editing -->
          <div class="w-[188px] h-[85px] border-r border-[#dcdcdc] flex flex-col">
            <div class="flex h-[71px] pl-[7px] shrink-0">
              <div class="w-[89px] flex flex-col">
                <div class="h-[21px] flex items-center"><svg class="w-[15px] h-[15px] mr-1" viewBox="0 0 15 15"><path d="M14 3.500V1H1l6.500 6.500L1 14h13v-2.500" fill="none" stroke="#444" stroke-width="2"/></svg><div class="w-[60px]">AutoSum</div><svg class="w-[6px] h-1"><use href="#caret"/></svg></div>
                <div class="h-[26px] flex items-center"><svg class="w-[14px] h-[15px] mr-[5px]" viewBox="0 0 14 15"><path d="M.5.5h13v14H.5zM.5 3h13" fill="#fff" stroke="#666"/><path d="M7 5v7M4 9l3 3 3-3" fill="none" stroke="#2e75b6" stroke-width="1.500"/></svg>Fill<svg class="w-[6px] h-1 ml-[3px]"><use href="#caret"/></svg></div>
                <div class="h-[20px] flex items-center"><svg class="w-[14px] h-[14px] mr-[5px]" viewBox="0 0 14 14"><path d="M0 8l7-8 5 4-7 8z" fill="#f08a96"/><path d="M0 8.500L4.500 13H12" fill="none" stroke="#777" stroke-width="1.300"/></svg><span class="tracking-[-0.200px]">Clear</span><svg class="w-[6px] h-1 ml-[3px]"><use href="#caret"/></svg></div>
              </div>
              <div class="w-[42px] leading-4 flex flex-col items-center pt-[3px]"><svg class="w-[30px] h-[32px]" viewBox="0 0 30 32"><path d="M1 12.500L5 2l4 10.500M2.500 9h5" fill="none" stroke="#2e75b6" stroke-width="1.800"/><path d="M1 17.500h7.500L1.200 27H9" fill="none" stroke="#8a5fb5" stroke-width="1.800"/><path d="M12 9h18l-6 8v6l-5-3v-3z" fill="#777"/></svg><div class="mt-px">Sort &amp;</div><div class="flex items-center gap-[3px]">Filter<svg class="w-[6px] h-1"><use href="#caret"/></svg></div></div>
              <div class="w-[44px] leading-4 flex flex-col items-center pt-[3px]"><svg class="w-[28px] h-[32px]" viewBox="0 0 28 32"><path d="M5 4h6v4h1v4h4V8h1V4h6v4l4 10v8H16v-8h-4v8H1v-8L5 8z" fill="#5f5f5f"/><path d="M4 20v5M8 10v4M19 20v5M23 10v4" stroke="#bbb" stroke-width="1.500"/></svg><div class="mt-px tracking-[-0.200px]">Find &amp;</div><div class="flex items-center gap-[3px]"><span class="tracking-[-0.200px]">Select</span><svg class="w-[6px] h-1"><use href="#caret"/></svg></div></div>
            </div>
            <div class="text-center leading-[20px] text-[11.200px] text-[#666] pr-0.5">Editing</div>
          </div>
          <svg class="w-[9px] h-[6px] ml-[79px] mt-[78px]" viewBox="0 0 9 6"><path d="M.5 5l4-4 4 4" fill="none" stroke="#666" stroke-width="1.800"/></svg>
        </div>
        <!-- Formula bar -->
        <div class="h-[46px] flex items-center pt-px">
          <div class="ml-[5px] w-[103px] h-[27px] border border-[#cfcfcf] flex items-center pl-[7px]"><div class="w-[81px]">C132</div><svg class="w-[7px] h-[5px]"><use href="#caret"/></svg></div>
          <svg class="w-[2px] h-[11px] ml-[14px]" viewBox="0 0 2 11"><path d="M0 0h2v2H0zM0 4.500h2v2H0zM0 9h2v2H0z" fill="#aaa"/></svg>
          <div class="ml-[14px] w-[111px] h-[27px] border border-[#cfcfcf] flex items-center pl-[10px]">
            <svg class="w-[17px] h-[15px]" viewBox="0 0 17 15"><path d="M1 1l15 13M15 0L2 15" stroke="#c4bdb9" stroke-width="2"/></svg>
            <svg class="w-[19px] h-[15px] ml-[18px]" viewBox="0 0 19 15"><path d="M1 8l6 5.500L18 1" fill="none" stroke="#c4c4c4" stroke-width="3"/></svg>
            <div class="ml-[18px] font-['Liberation_Serif',serif] italic text-[23px] leading-5 text-[#666] [-webkit-text-stroke:0.4px_#666]">fx</div>
          </div>
          <div class="ml-[4px] w-[1117px] h-[27px] border border-[#cfcfcf] flex items-center pl-[10px] text-[13.300px] text-[#333]"><div class="w-[1091px]">- click on "Search"</div><svg class="w-3 h-2" viewBox="0 0 12 8"><path d="M1 1.500l5 4.500 5-4.500" fill="none" stroke="#666" stroke-width="3"/></svg></div>
        </div>
        <!-- Sheet area -->
        <div class="h-[493px] flex font-['Liberation_Sans',Arial,sans-serif]">
          <div class="w-[1353px] h-[493px] overflow-hidden flex flex-col">
            <!-- Column headers -->
            <div class="h-[18px] flex text-[14px] leading-[18px] text-center text-[#555]">
              <div class="w-[64px] flex items-start pt-px pl-[3px]"><div class="w-[16px] h-[16px] border border-[#999] text-[11px] leading-[14px]">1</div><div class="w-[15px] h-[16px] border border-l-0 border-[#999] text-[11px] leading-[14px]">2</div><svg class="w-2 h-2 ml-[17px] mt-1" viewBox="0 0 8 8"><path d="M8 0v8H0z" fill="#ccc"/></svg></div>
              <div class="w-[101px] border-r border-[#e6e6e6]">A</div><div class="w-[237px]">B</div><div class="w-[303px] bg-[#e1e1e1] border-b-2 border-[#217346] text-[#217346]">C</div><div class="w-[247px] border-r border-[#e6e6e6]">D</div><div class="w-[163px] border-r border-[#e6e6e6]">E</div><div class="w-[111px] border-r border-[#e6e6e6]">F</div><div class="w-[123px] border-r border-[#e6e6e6]">G</div>
            </div>
            <div class="h-[475px] flex text-[13.100px] leading-[17px] text-black">
              <!-- Outline gutter -->
              <div class="w-[38px] pt-[32px] flex">
                <div class="w-[20px] flex flex-col items-center"><div class="ml-[1px] w-[15px] h-[16px] border border-[#999] grid place-items-center"><div class="w-[7px] h-[2px] bg-[#555]"></div></div><div class="flex-1 w-[2px] mr-[2px] bg-[#aaa]"></div></div>
                <div class="w-[10px] flex flex-col items-center pt-[67px] gap-[90px]"><div class="size-[2px] bg-[#aaa]"></div><div class="size-[2px] bg-[#aaa]"></div><div class="size-[2px] bg-[#aaa]"></div><div class="size-[2px] bg-[#aaa]"></div></div>
              </div>
              <!-- Row numbers -->
              <div class="w-[26px] flex flex-col text-[13.300px] leading-[15px] text-[#666] text-right pr-px border-r border-[#aaa]">
                <div class="h-[27px] flex items-end justify-end border-b border-[#ddd]">130</div>
                <div class="h-[27px] flex items-end justify-end border-b border-[#ddd]">131</div>
                <div class="h-[92px] -mr-[2px] pr-px flex items-end justify-end bg-[#e1e1e1] border-r-2 border-[#217346] text-[#217346] font-bold text-[13px]">132</div>
                <div class="h-[92px] flex items-end justify-end border-b border-[#ddd]">133</div>
                <div class="h-[91px] flex items-end justify-end border-b border-[#ddd]">134</div>
                <div class="h-[97px] flex items-end justify-end border-b border-[#ddd]">135</div>
              </div>
              <!-- Cells -->
              <div class="w-[1289px] relative flex flex-col">
                <div class="h-[54px] w-[1289px] bg-[#b7b7b7] font-bold text-[13.200px] pt-[27px] pl-[2px]">Check Functionality</div>
                <div class="h-[92px] flex [&>div]:border-r [&>div]:border-b [&>div]:border-[#bdbdbd] [&>div]:pl-[2px]">
                  <div class="w-[101px] font-bold">65</div><div class="w-[237px] bg-[#fff100]">Verify default search</div><div class="w-[303px] bg-[#fff100]">- click on "Search"</div><div class="w-[247px] bg-[#fff100]">View all</div><div class="w-[163px]"></div><div class="w-[111px]"></div><div class="w-[123px]"></div><div class="w-[4px]"></div>
                </div>
                <div class="h-[92px] flex [&>div]:border-r [&>div]:border-b [&>div]:border-[#bdbdbd] [&>div]:pl-[2px]">
                  <div class="w-[101px] font-bold">66</div><div class="w-[237px] bg-[#fff100]">Verify search in case all fields</div><div class="w-[303px] bg-[#fff100]">- Input valid all fields<br>- click on "Search"</div><div class="w-[247px] bg-[#fff100]">- Display values that match the search<br>fields</div><div class="w-[163px]"></div><div class="w-[111px]"></div><div class="w-[123px]"></div><div class="w-[4px]"></div>
                </div>
                <div class="h-[91px] flex [&>div]:border-r [&>div]:border-b [&>div]:border-[#bdbdbd] [&>div]:pl-[2px]">
                  <div class="w-[101px] font-bold">67</div><div class="w-[237px] bg-[#fff100] tracking-[0.040px]">Verify search in case search with<br>Uppercase input</div><div class="w-[303px] bg-[#fff100]">- Click on "Candiate Name"<br>- Input an existed Candidate name in<br>UPPERCASE</div><div class="w-[247px] bg-[#fff100]">All Candidates have name the same as<br>search key are displayed</div><div class="w-[163px]"></div><div class="w-[111px]"></div><div class="w-[123px]"></div><div class="w-[4px]"></div>
                </div>
                <div class="h-[97px] flex [&>div]:border-r [&>div]:border-b [&>div]:border-[#bdbdbd] [&>div]:pl-[2px]">
                  <div class="w-[101px] font-bold">68</div><div class="w-[237px] bg-[#fff100] tracking-[0.080px]">Verify search in case only "Job Title" is<br>selected</div><div class="w-[303px] bg-[#fff100]">- Click on "Job Title"<br>- Select value in Job Title<br>- Click on "Search"</div><div class="w-[247px] bg-[#fff100] text-[#5a5420]">Candidates display at the bottom page.</div><div class="w-[163px]"></div><div class="w-[111px]"></div><div class="w-[123px]"></div><div class="w-[4px]"></div>
                </div>
                <div class="h-[49px] flex [&>div]:border-r [&>div]:border-b [&>div]:border-[#bdbdbd] [&>div]:pl-[2px]">
                  <div class="w-[101px] font-bold">69</div><div class="w-[237px] bg-[#fff100] tracking-[0.140px]">Verify search in case only "Vacancy" is<br>selected</div><div class="w-[303px] bg-[#fff100]">&nbsp;Click on "Vacancy"<br>- Select value in Vacancy<br>- Click on "Search"</div><div class="w-[247px] bg-[#fff100]">Candidates display at the bottom page.</div><div class="w-[163px]"></div><div class="w-[111px]"></div><div class="w-[123px]"></div><div class="w-[4px]"></div>
                </div>
                <div class="absolute left-[336px] top-[53px] w-[305px] h-[94px] border-2 border-[#217346]"></div>
                <svg class="absolute left-[738px] top-[183px] w-4 h-4" viewBox="0 0 16 16"><path d="M5.500 1.500h5v4h4v5h-4v4h-5v-4h-4v-5h4z" fill="#fff" stroke="#000" stroke-width="1.500"/></svg>
              </div>
            </div>
          </div>
          <!-- Vertical scroll bar -->
          <div class="w-[21px] flex flex-col items-center bg-[#f4f4f4] pt-[3px]">
            <div class="w-4 h-[15px] bg-white border border-[#bbb] grid place-items-center"><svg class="w-[6px] h-1 rotate-180"><use href="#caret"/></svg></div>
            <div class="mt-[56px] w-4 h-[17px] bg-white border border-[#aaa]"></div>
            <div class="mt-[388px] w-4 h-[14px] bg-white border border-[#bbb] grid place-items-center"><svg class="w-[6px] h-1"><use href="#caret"/></svg></div>
          </div>
        </div>
        <!-- Sheet tabs -->
        <div class="h-[28px] bg-[#f5f5f5] flex items-center text-[12.300px]">
          <svg class="w-1 h-[7px] ml-[28px]" viewBox="0 0 4 7"><path d="M4 0v7L0 3.500z" fill="#bbb"/></svg><svg class="w-1 h-[7px] ml-[24px]" viewBox="0 0 4 7"><path d="M0 0v7l4-3.500z" fill="#bbb"/></svg>
          <div class="w-px h-5 bg-[#aaa] ml-[41px]"></div>
          <div class="ml-[2px] w-[141px] h-[22px] bg-[#fb5232] text-white grid place-items-center leading-5 pr-[2px]">Func-AddCandidate</div>
          <div class="ml-[2px] w-[161px] h-[25px] mb-[2px] bg-linear-to-b from-white to-[#f9d3c9] border-x border-b-2 border-white border-b-[#217346] text-[#1e6b47] font-bold grid place-items-center leading-5 pt-[3px]">Func-SearchCandidate</div>
          <svg class="w-[17px] h-[17px] ml-[33px]" viewBox="0 0 17 17"><circle cx="8.500" cy="8.500" r="7.800" fill="none" stroke="#777"/><path d="M8.500 4.500v8M4.500 8.500h8" stroke="#666" stroke-width="1.500"/></svg>
          <svg class="w-[2px] h-[11px] ml-[366px]" viewBox="0 0 2 11"><path d="M0 0h2v2H0zM0 4.500h2v2H0zM0 9h2v2H0z" fill="#aaa"/></svg>
          <div class="ml-[15px] w-[512px] h-[15px] bg-[#e8e8e8] flex">
            <div class="w-[15px] bg-white border border-[#bbb] grid place-items-center"><svg class="w-1 h-[7px]" viewBox="0 0 4 7"><path d="M4 0v7L0 3.500z" fill="#555"/></svg></div>
            <div class="w-[344px] bg-white border border-l-0 border-[#aaa]"></div>
            <div class="ml-auto w-[15px] bg-white border border-[#bbb] grid place-items-center"><svg class="w-1 h-[7px]" viewBox="0 0 4 7"><path d="M0 0v7l4-3.500z" fill="#555"/></svg></div>
          </div>
        </div>
        <!-- Status bar -->
        <div class="h-[23px] bg-[#1e6b47] flex items-center text-[11px] text-white">
          <div class="ml-[8px] w-[1072px] tracking-[-0.100px] pb-px">READY</div>
          <div class="w-[38px] h-[23px] bg-[#0f5132] grid place-items-center"><svg class="w-[13px] h-[13px]" viewBox="0 0 13 13"><path d="M.5.5h12v12H.5zM.5 4.500h12M.5 8.500h12M4.500.5v12M8.500.5v12" fill="none" stroke="#fff"/></svg></div>
          <svg class="w-[13px] h-[13px] ml-[13px]" viewBox="0 0 13 13"><path d="M.5.5h12v12H.5zM3 2.500h7v8H3zM4 5h5M4 7h5" fill="none" stroke="#dfeee6"/></svg>
          <svg class="w-[14px] h-[13px] ml-[25px]" viewBox="0 0 14 13"><path d="M.5.5h13v12H.5z" fill="none" stroke="#dfeee6"/><path d="M2 1h4v7H2zM8 1h3v7H8z" fill="#dfeee6"/></svg>
          <svg class="w-[122px] h-[12px] ml-[17px]" viewBox="0 0 122 12"><path d="M0 6h7M10 6h101M114 6h8M118 2v8" stroke="#fff" stroke-width="1.300"/><path d="M60.500 0v12" stroke="#fff" stroke-width="3.500"/></svg>
          <div class="ml-[17px] tracking-[-0.200px] pb-px">100%</div>
        </div>
        <!-- Remote taskbar -->
        <div class="h-[40px] bg-[#1f1f1f] flex text-white">
          <div class="w-[49px] grid place-items-center"><svg class="w-4 h-4" viewBox="0 0 16 16" fill="#fff"><path d="M0 2l7-1v6.500H0zM8 .8L16 0v7.500H8zM0 8.500h7V15l-7-1zM8 8.500h8V16l-8-1z"/></svg></div>
          <div class="w-[48px] grid place-items-center"><svg class="w-[17px] h-[17px]" viewBox="0 0 17 17"><circle cx="8.500" cy="8.500" r="7" fill="none" stroke="#fff" stroke-width="2"/></svg></div>
          <div class="w-[40px] ml-[7px] border-b-3 border-[#f7b96b] grid place-items-center"><svg class="w-[23px] h-[22px]" viewBox="0 0 23 22"><path d="M11 6h11v11H11z" fill="#fff" stroke="#0a6ac0" stroke-width="1.500"/><path d="M11 7l5.500 5L22 7" fill="none" stroke="#0a6ac0" stroke-width="1.500"/><path d="M0 2.500L13 0v22L0 19.500z" fill="#0a6ac0"/><ellipse cx="6.500" cy="11" rx="3" ry="3.800" fill="none" stroke="#fff" stroke-width="1.800"/></svg></div>
          <div class="w-[40px] ml-[10px] border-b-3 border-[#f7b96b] grid place-items-center"><svg class="w-[22px] h-[20px]" viewBox="0 0 22 20"><path d="M0 1h8l2 3h12v15H0z" fill="#fcd671"/><path d="M0 6h22v13H0z" fill="#fbe08a"/><path d="M4 19v-6a3 3 0 0 1 3-3h8a3 3 0 0 1 3 3v6h-4v-4H8v4z" fill="#3fa0d8"/></svg></div>
          <div class="w-[40px] ml-[9px] border-b-3 border-[#f7b96b] grid place-items-center"><svg class="w-[24px] h-[24px]" viewBox="0 0 24 24"><circle cx="9" cy="9" r="9" fill="#1aa0e6"/><circle cx="13" cy="13" r="7" fill="#1aa0e6"/><path d="M13 6.500c-2-2-7-1.500-7 1s7 1.500 7 4.500-6 3.500-8 1" fill="none" stroke="#fff" stroke-width="2"/><circle cx="17.500" cy="17" r="6.500" fill="#e8432d"/><path d="M15.500 15l2-1.500v7" fill="none" stroke="#fff" stroke-width="1.300"/></svg></div>
          <div class="w-[40px] ml-[10px] border-b-3 border-[#f7b96b] grid place-items-center"><svg class="w-[25px] h-[24px]" viewBox="0 0 25 24"><use href="#teams" width="24" height="22"/><circle cx="19" cy="18.500" r="5.500" fill="#8cbd3f"/><path d="M16.500 18.500l2 2 3.500-4" fill="none" stroke="#fff" stroke-width="1.500"/></svg></div>
          <div class="w-[40px] ml-[8px] border-b-3 border-[#f7b96b] grid place-items-center"><svg class="w-[22px] h-[22px]" viewBox="0 0 22 22"><circle cx="11" cy="11" r="11" fill="#fbc116"/><path d="M11 11L1.500 5.500A11 11 0 0 1 20.500 5.500z" fill="#e33b2e"/><path d="M11 11L1.500 5.500A11 11 0 0 0 11 22l5-9z" fill="#2da94f"/><circle cx="11" cy="11" r="5" fill="#fff"/><circle cx="11" cy="11" r="4" fill="#4285f4"/></svg></div>
          <div class="w-[40px] ml-[9px] border-b-3 border-[#f7b96b] grid place-items-center"><svg class="w-6 h-6" viewBox="0 0 24 24"><circle cx="12" cy="12" r="12" fill="#1a7fd0"/><path d="M2 7C7-3 23-2 24 11c0 5-5 6-9 5 4-4 1-9-4-9-4 0-7 1-9 5z" fill="#3cc9a4"/><path d="M11 11c-3 6 2 11 10 9-5 5-15 4-15-4 0-3 2-5 5-5z" fill="#0c4f9c"/><path d="M12 10.500c3 0 4 3 2.500 5.500h9l-3 4c-6 1-11-3-8.500-9.500z" fill="#1f1f1f"/></svg></div>
          <div class="w-[49px] ml-[5px] grid place-items-center"><svg class="w-[17px] h-[23px]" viewBox="0 0 17 23"><path d="M0 0h17v23H0z" fill="#fff"/><path d="M2 2h13v4H2z" fill="#222"/><path d="M3.500 8.500v12M8.500 8.500v12M13.500 8.500v12" stroke="#222" stroke-width="2.500" stroke-dasharray="2 1.300"/></svg></div>
          <div class="w-[40px] ml-[5px] border-b-3 border-[#f7b96b] grid place-items-center"><svg class="w-[23px] h-[22px]" viewBox="0 0 23 22"><path d="M7 0h15l-5 20H1z" fill="#8fb9c6"/><path d="M8 2h13l-2 8L6 8z" fill="#c8e0e6"/><path d="M1 20h16l5-20 1 2-4 20H2z" fill="#4d6f7a"/></svg></div>
          <div class="w-[40px] ml-[9px] border-b-3 border-[#f7b96b] grid place-items-center"><svg class="w-[19px] h-[19px]" viewBox="0 0 19 19"><path d="M0 0h19v10l-9 9H0z" fill="#fff"/><path d="M19 10l-9 9v-9z" fill="#1f1f1f"/><path d="M10 19l9-8v8z" fill="#fff"/></svg></div>
          <div class="w-[40px] ml-[10px] border-b-3 border-[#f7b96b] grid place-items-center"><svg class="w-[22px] h-[20px]" viewBox="0 0 22 20"><path d="M10 2h12v16H10z" fill="#fff"/><path d="M13 5h7M13 8h7M13 11h7M13 14h7" stroke="#2b579a" stroke-width="1.500"/><path d="M0 2l13-2v20L0 18z" fill="#2b579a"/><path d="M2.500 6.500L4 13l2.500-6L9 13l1.500-6.500" fill="none" stroke="#fff" stroke-width="1.400"/></svg></div>
          <div class="w-[46px] ml-[6px] bg-[#4a4b4a] border-b-3 border-[#f7b96b] grid place-items-center"><svg class="w-[22px] h-[20px]" viewBox="0 0 22 20"><path d="M10 2h11v16H10z" fill="#fff" stroke="#217346"/><path d="M13 5h7M13 8h7M13 11h7M13 14h7M17 3v14" stroke="#217346" stroke-width="1.300"/><path d="M0 2l13-2v20L0 18z" fill="#1e7145"/><path d="M4 6.500l5 7M9 6.500l-5 7" stroke="#fff" stroke-width="1.800"/></svg></div>
          <div class="w-[40px] ml-[5px] border-b-3 border-[#f7b96b] grid place-items-center"><svg class="w-[21px] h-[23px]" viewBox="0 0 21 23"><path d="M0 1h19v22H0z" fill="#5fb52c"/><path d="M0 1h19v13H0z" fill="#e8f3dd"/><path d="M3 8v7M5 12h3M9 12h4" stroke="#345" stroke-width="1.400"/><path d="M21 3L13 16" stroke="#f0a030" stroke-width="2.500"/></svg></div>
          <div class="flex items-center ml-[439px]">
            <svg class="w-3 h-2" viewBox="0 0 12 8"><path d="M1 7l5-5.500L11 7" fill="none" stroke="#fff" stroke-width="1.400"/></svg>
            <div class="ml-[10px] w-[15px] h-4 bg-[#f3d9da] text-[#c22a30] text-[13px] font-bold leading-4 text-center">V</div>
            <svg class="w-[17px] h-[14px] ml-[9px]" viewBox="0 0 17 14"><path d="M5 2h11v8H6M9 10v3M5 13h8M1 1h4v4H1zM3 5v8" fill="none" stroke="#fff" stroke-width="1.200"/></svg>
            <svg class="w-[18px] h-[14px] ml-[7px]" viewBox="0 0 18 14"><path d="M1 5v4h3l4 4V1L4 5zM10.500 5q1.500 2 0 4M12.500 3q3 4 0 8M15 1q4.500 6 0 12" fill="none" stroke="#fff" stroke-width="1.100"/></svg>
            <div class="ml-[8px] w-[25px] text-[12px] tracking-[-0.300px]">ENG</div>
            <div class="ml-[10px] w-[60px] text-center text-[10.900px] leading-[18px]">10:16<br>16/07/2021</div>
            <svg class="w-[25px] h-[26px] ml-[17px] mt-1" viewBox="0 0 25 26"><path d="M0 0h16v13h-9l-4 3.500V13H0z" fill="#fff"/><path d="M3 4h10M3 7h10M3 10h7" stroke="#1f1f1f" stroke-width="1.200"/><circle cx="15.500" cy="16" r="7.800" fill="#1f1f1f" stroke="#777" stroke-width="1.300"/><path d="M13.500 14l2.500-2v8" fill="none" stroke="#fff" stroke-width="1.300"/></svg>
          </div>
          <div class="ml-auto mr-[3px] w-px bg-[#555]"></div>
        </div>
      </div>
    </div>

    <!-- Participants -->
    <div class="h-[116px] bg-[#1b1b1b] flex text-[18px] font-semibold">
      <div class="w-[935px] flex items-center pl-[121px] gap-[52px] [&>div]:size-[53px] [&>div]:rounded-full [&>div]:grid [&>div]:place-items-center [&>div]:shrink-0">
        <div class="bg-[#6264a7] size-[55px]! text-[16px] mt-[2px] -mr-[2px]">+3</div>
        <div class="bg-[#d0ebdd] text-[#24704a]">ĐQ</div>
        <div class="bg-[#d6d3e9] text-[#2d2560]">NL</div>
        <div class="bg-[#f2d7d8] text-[#7f2a38]">NT</div>
        <div class="bg-[#c7d3e8] text-[#0f2e66]">NT</div>
        <div class="bg-[#d6d3e9] text-[#33306b]">TL</div>
        <div class="bg-[#cfe0d6] text-[#17482f]">N</div>
        <div class="bg-[#e8ddd9] text-[#54352b]">VH</div>
      </div>
      <div class="w-[225px] bg-[#3b3b3b] grid place-items-center"><div class="size-[55px] rounded-full bg-[#fcead4] text-[#8f5a1c] grid place-items-center">HT</div></div>
      <div class="w-[225px] bg-[#373737] grid place-items-center"><div class="size-[55px] rounded-full bg-[#d6d3e9] text-[#2d2560] grid place-items-center">NA</div></div>
      <div class="w-[225px] bg-[#323232] grid place-items-center"><div class="size-[55px] rounded-full bg-[#cfdbdf] text-[#173c45] grid place-items-center">ĐP</div></div>
      <div class="w-[225px] bg-radial from-[#504e75] from-20% via-[#434159] via-50% to-[#393846] to-80% grid place-items-center"><div class="size-[68px] rounded-full border-3 border-[#9ea2ff] bg-[#2f2e42] grid place-items-center"><div class="size-[55px] rounded-full bg-[#f5d3df] text-[#7a1f45] grid place-items-center">YH</div></div></div>
    </div>
  </main>
</div>
<div class="h-[2px] shrink-0 bg-[#e6e6e6] flex"><div class="ml-[60px] w-[430px] bg-white"></div></div>
</body>
</html>
